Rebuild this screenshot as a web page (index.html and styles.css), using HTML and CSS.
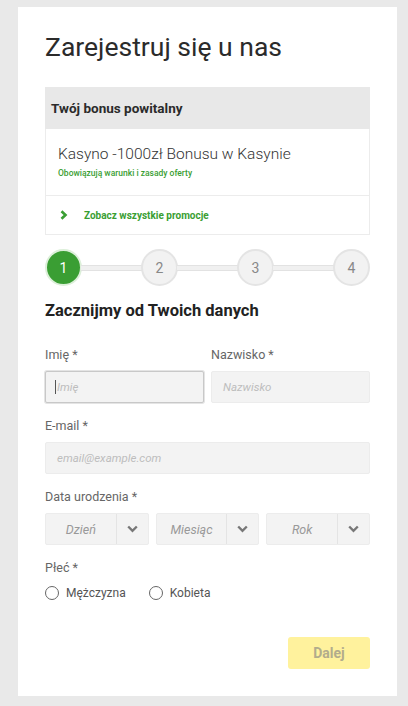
FILE: index.html
```html
<!DOCTYPE html>
<html lang="pl">
<head>
  <meta charset="UTF-8" />
  <meta name="viewport" content="width=device-width, initial-scale=1.0"/>
  <title>Rejestracja</title>
  <link rel="stylesheet" href="styles.css">
</head>
<body>
  <div class="card">
    <h1>Zarejestruj się u nas</h1>

    <div class="bonus">
      <div class="bonus-head">Twój bonus powitalny</div>
      <div class="bonus-body">
        <div class="bonus-title">Kasyno -1000zł Bonusu w Kasynie</div>
        <div class="bonus-terms">Obowiązują warunki i zasady oferty</div>
      </div>
      <div class="bonus-link">
        <svg width="8" height="10" viewBox="0 0 8 10"><path d="M1.5 1.2 L5.5 5 L1.5 8.8" fill="none" stroke="#3a9e33" stroke-width="2.6"/></svg>
        <span>Zobacz wszystkie promocje</span>
      </div>
    </div>

    <div class="steps">
      <div class="step active">1</div>
      <div class="step-line"></div>
      <div class="step">2</div>
      <div class="step-line"></div>
      <div class="step">3</div>
      <div class="step-line"></div>
      <div class="step">4</div>
    </div>

    <h2>Zacznijmy od Twoich danych</h2>

    <div class="row two">
      <div class="field">
        <label>Imię *</label>
        <div class="input focus"><span class="caret"></span>Imię</div>
      </div>
      <div class="field">
        <label>Nazwisko *</label>
        <div class="input">Nazwisko</div>
      </div>
    </div>

    <div class="field">
      <label>E-mail *</label>
      <div class="input">email@example.com</div>
    </div>

    <div class="field">
      <label>Data urodzenia *</label>
      <div class="row three">
        <div class="select"><span>Dzień</span><i><svg width="11" height="8" viewBox="0 0 11 8"><path d="M1.2 1.5 L5.5 5.8 L9.8 1.5" fill="none" stroke="#777" stroke-width="2.4"/></svg></i></div>
        <div class="select"><span>Miesiąc</span><i><svg width="11" height="8" viewBox="0 0 11 8"><path d="M1.2 1.5 L5.5 5.8 L9.8 1.5" fill="none" stroke="#777" stroke-width="2.4"/></svg></i></div>
        <div class="select"><span>Rok</span><i><svg width="11" height="8" viewBox="0 0 11 8"><path d="M1.2 1.5 L5.5 5.8 L9.8 1.5" fill="none" stroke="#777" stroke-width="2.4"/></svg></i></div>
      </div>
    </div>

    <div class="field">
      <label>Płeć *</label>
      <div class="radios">
        <div class="radio"><span class="dot"></span>Mężczyzna</div>
        <div class="radio"><span class="dot"></span>Kobieta</div>
      </div>
    </div>

    <div class="actions">
      <button class="next-btn">Dalej</button>
    </div>
  </div>
</body>
</html>
```

FILE: styles.css
```css
body {
  margin: 0;
  background-color: #e9e9e9;
  font-family: Roboto, "Liberation Sans", sans-serif;
  color: #333;
}
.card {
  background-color: #fff;
  margin: 7px 11px 10px 18px;
  padding: 24px 27px 27px 27px;
  min-height: 638px;
}
h1 {
  margin: 0;
  font-size: 26.5px;
  font-weight: 400;
  line-height: 32px;
  color: #2b2b2b;
}
.bonus {
  margin-top: 24px;
  border: 1px solid #ececec;
}
.bonus-head {
  background-color: #e8e8e8;
  height: 42px;
  line-height: 42px;
  padding-left: 6px;
  font-size: 13.5px;
  font-weight: 700;
  color: #2b2b2b;
  margin: -1px -1px 0 -1px;
}
.bonus-body {
  padding: 15px 12px 17px 12px;
  border-bottom: 1px solid #ececec;
}
.bonus-title {
  font-size: 15.5px;
  font-weight: 300;
  color: #333;
  line-height: 20px;
}
.bonus-terms {
  font-size: 8.5px;
  color: #3a9e33;
  font-weight: 500;
  margin-top: 4px;
}
.bonus-link {
  display: flex;
  align-items: center;
  height: 38px;
  padding-left: 14px;
  font-size: 10px;
  font-weight: 700;
  color: #3a9e33;
}
.bonus-link span {
  margin-left: 16px;
}
.steps {
  display: flex;
  align-items: center;
  margin-top: 14px;
}
.step {
  width: 33px;
  height: 33px;
  border-radius: 50%;
  border: 2px solid #e4e4e4;
  background-color: #f2f2f2;
  color: #888;
  font-size: 14px;
  display: flex;
  align-items: center;
  justify-content: center;
  flex-shrink: 0;
}
.step.active {
  background-color: #3a9e33;
  border-color: #dcefd9;
  color: #fff;
}
.step-line {
  flex: 1;
  height: 4px;
  background-color: #f0f0f0;
  border-top: 1px solid #e2e2e2;
  border-bottom: 1px solid #e2e2e2;
  margin: 0 -1px;
}
h2 {
  margin: 14px 0 0 0;
  font-size: 16.5px;
  font-weight: 700;
  line-height: 22px;
  color: #222;
}
.row.two {
  display: grid;
  grid-template-columns: 1fr 1fr;
  gap: 7px;
  margin-top: 25px;
}
.row.three {
  display: grid;
  grid-template-columns: 1fr 1fr 1fr;
  gap: 7px;
}
.field {
  margin-top: 15px;
}
.row.two .field {
  margin-top: 0;
}
label {
  display: block;
  font-size: 12.5px;
  color: #666;
  line-height: 16px;
  margin-bottom: 8px;
}
.input {
  height: 32px;
  box-sizing: border-box;
  background-color: #f3f3f3;
  border: 1px solid #ececec;
  border-radius: 2px;
  font-size: 11.5px;
  font-style: italic;
  color: #bdbdbd;
  display: flex;
  align-items: center;
  padding-left: 11px;
}
.input.focus {
  border: 1px solid #c8c8c8;
  box-shadow: 0 0 0 1px #e4e4e4;
  padding-left: 9px;
}
.caret {
  display: inline-block;
  width: 1px;
  height: 14px;
  background-color: #555;
  margin-right: 1px;
}
.select {
  height: 32px;
  box-sizing: border-box;
  background-color: #f3f3f3;
  border: 1px solid #ececec;
  border-radius: 2px;
  display: flex;
  font-size: 12.5px;
  font-style: italic;
  color: #999;
}
.select span {
  flex: 1;
  display: flex;
  align-items: center;
  justify-content: center;
}
.select i {
  width: 31px;
  border-left: 1px solid #e4e4e4;
  display: flex;
  align-items: center;
  justify-content: center;
}
.radios {
  display: flex;
  gap: 23px;
  margin-top: 10px;
}
.radio {
  display: flex;
  align-items: center;
  font-size: 12px;
  color: #555;
}
.dot {
  width: 12px;
  height: 12px;
  border: 1px solid #666;
  border-radius: 50%;
  margin-right: 7px;
}
.actions {
  display: flex;
  justify-content: flex-end;
  margin-top: 37px;
}
.next-btn {
  width: 82px;
  height: 32px;
  border: none;
  border-radius: 3px;
  background-color: #fff29d;
  color: #b2ac8c;
  font-family: Roboto, "Liberation Sans", sans-serif;
  font-size: 14px;
  font-weight: 700;
}
```
